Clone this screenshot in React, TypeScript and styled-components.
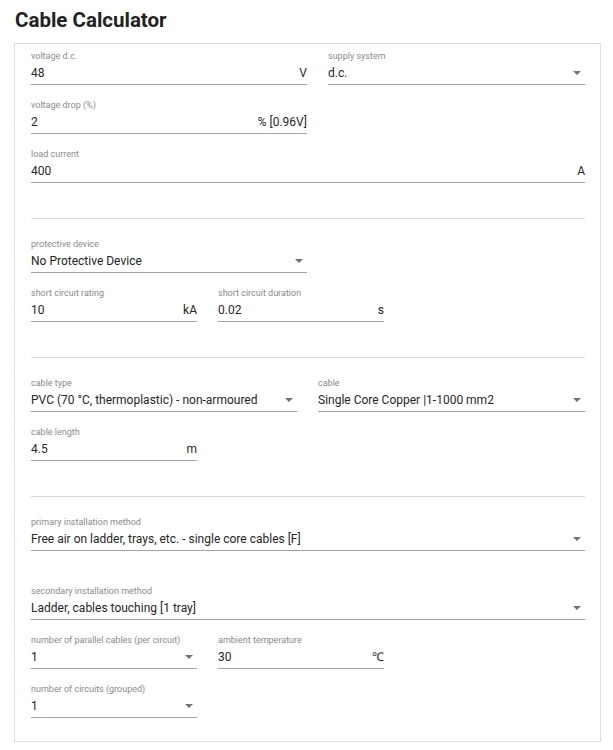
import React from "react";
import styled, { createGlobalStyle } from "styled-components";

const Global = createGlobalStyle`
  html, body { margin: 0; padding: 0; background: #fff; }
  body { font-family: Roboto, "Liberation Sans", Arial, sans-serif; color: #212121; }
`;

const Page = styled.div`
  padding: 8px 12px 8px 14px;
  width: 613px;
  box-sizing: border-box;
`;

const Title = styled.h1`
  margin: 0 0 11px 1px;
  font-size: 20.5px;
  line-height: 24px;
  font-weight: 700;
  color: #222;
`;

const Card = styled.div`
  border: 1px solid #d9e0e3;
  width: 587px;
  box-sizing: border-box;
  padding: 6px 15px 23px 16px;
  display: flex;
  flex-direction: column;
`;

const Row = styled.div<{ $last?: boolean }>`
  display: flex;
  gap: 21px;
  margin-bottom: ${(p) => (p.$last ? 0 : 14)}px;
`;

const FieldBox = styled.div<{ $w?: number }>`
  width: ${(p) => (p.$w ? `${p.$w}px` : "100%")};
  display: flex;
  flex-direction: column;
`;

const Label = styled.div`
  font-size: 9px;
  line-height: 12px;
  color: #8a8a8a;
  white-space: nowrap;
`;

const InputRow = styled.div`
  height: 22px;
  border-bottom: 1px solid #a3a3a3;
  display: flex;
  align-items: center;
  font-size: 12px;
  line-height: 22px;
  color: #262626;
`;

const Value = styled.span`
  flex: 1;
  white-space: nowrap;
`;

const Unit = styled.span`
  white-space: nowrap;
`;

const Arrow = styled.span`
  width: 0;
  height: 0;
  border-left: 4.5px solid transparent;
  border-right: 4.5px solid transparent;
  border-top: 4.5px solid #737373;
  margin-right: 4px;
`;

const Divider = styled.div`
  height: 1px;
  background: #d6dbde;
  margin: 21px 0 19px;
`;

const Spacer = styled.div<{ $h: number }>`
  height: ${(p) => p.$h}px;
`;

type FieldProps = { label: string; value: string; unit?: string; select?: boolean; w?: number };

const Field = ({ label, value, unit, select, w }: FieldProps) => (
  <FieldBox $w={w}>
    <Label>{label}</Label>
    <InputRow>
      <Value>{value}</Value>
      {unit && <Unit>{unit}</Unit>}
      {select && <Arrow />}
    </InputRow>
  </FieldBox>
);

export default function App() {
  return (
    <>
      <Global />
      <Page>
        <Title>Cable Calculator</Title>
        <Card>
          <Row>
            <Field w={276} label="voltage d.c." value="48" unit="V" />
            <Field w={257} label="supply system" value="d.c." select />
          </Row>
          <Row>
            <Field w={276} label="voltage drop (%)" value="2" unit="% [0.96V]" />
          </Row>
          <Row>
            <Field label="load current" value="400" unit="A" />
          </Row>
          <Divider />
          <Row>
            <Field w={276} label="protective device" value="No Protective Device" select />
          </Row>
          <Row>
            <Field w={166} label="short circuit rating" value="10" unit="kA" />
            <Field w={166} label="short circuit duration" value="0.02" unit="s" />
          </Row>
          <Divider />
          <Row>
            <Field w={266} label="cable type" value="PVC (70 °C, thermoplastic) - non-armoured" select />
            <Field w={267} label="cable" value="Single Core Copper |1-1000 mm2" select />
          </Row>
          <Row>
            <Field w={166} label="cable length" value="4.5" unit="m" />
          </Row>
          <Divider />
          <Row>
            <Field label="primary installation method" value="Free air on ladder, trays, etc. - single core cables [F]" select />
          </Row>
          <Spacer $h={20} />
          <Row>
            <Field label="secondary installation method" value="Ladder, cables touching [1 tray]" select />
          </Row>
          <Row>
            <Field w={166} label="number of parallel cables (per circuit)" value="1" select />
            <Field w={166} label="ambient temperature" value="30" unit="℃" />
          </Row>
          <Row $last>
            <Field w={166} label="number of circuits (grouped)" value="1" select />
          </Row>
        </Card>
      </Page>
    </>
  );
}
